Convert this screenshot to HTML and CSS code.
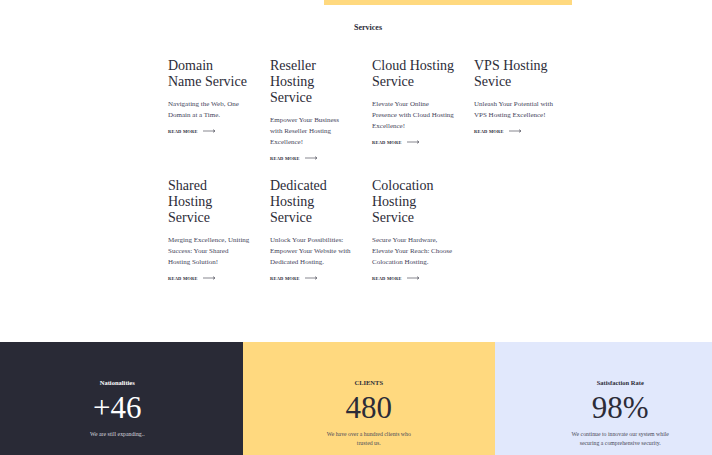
FILE: index.html
```html
<!DOCTYPE html>
<html lang="en">
<head>
<meta charset="utf-8">
<title>Services</title>
<link rel="stylesheet" href="styles.css">
</head>
<body>
<div class="topbar"></div>
<section class="services">
  <h2 class="title">Services</h2>
  <div class="grid">
    <div class="card">
      <h3>Domain<br>Name Service</h3>
      <p>Navigating the Web, One Domain at a Time.</p>
      <a class="more" href="#">Read more <svg width="13" height="4" viewBox="0 0 13 4"><path d="M0 2H12M10 0.6L12 2L10 3.4" fill="none" stroke="#55555f" stroke-width="0.7"/></svg></a>
    </div>
    <div class="card">
      <h3>Reseller Hosting Service</h3>
      <p>Empower Your Business with Reseller Hosting Excellence!</p>
      <a class="more" href="#">Read more <svg width="13" height="4" viewBox="0 0 13 4"><path d="M0 2H12M10 0.6L12 2L10 3.4" fill="none" stroke="#55555f" stroke-width="0.7"/></svg></a>
    </div>
    <div class="card">
      <h3>Cloud Hosting Service</h3>
      <p>Elevate Your Online Presence with Cloud Hosting Excellence!</p>
      <a class="more" href="#">Read more <svg width="13" height="4" viewBox="0 0 13 4"><path d="M0 2H12M10 0.6L12 2L10 3.4" fill="none" stroke="#55555f" stroke-width="0.7"/></svg></a>
    </div>
    <div class="card">
      <h3>VPS Hosting Sevice</h3>
      <p>Unleash Your Potential with VPS Hosting Excellence!</p>
      <a class="more" href="#">Read more <svg width="13" height="4" viewBox="0 0 13 4"><path d="M0 2H12M10 0.6L12 2L10 3.4" fill="none" stroke="#55555f" stroke-width="0.7"/></svg></a>
    </div>
    <div class="card">
      <h3>Shared Hosting Service</h3>
      <p>Merging Excellence, Uniting Success: Your Shared Hosting Solution!</p>
      <a class="more" href="#">Read more <svg width="13" height="4" viewBox="0 0 13 4"><path d="M0 2H12M10 0.6L12 2L10 3.4" fill="none" stroke="#55555f" stroke-width="0.7"/></svg></a>
    </div>
    <div class="card">
      <h3>Dedicated Hosting Service</h3>
      <p>Unlock Your Possibilities: Empower Your Website with Dedicated Hosting.</p>
      <a class="more" href="#">Read more <svg width="13" height="4" viewBox="0 0 13 4"><path d="M0 2H12M10 0.6L12 2L10 3.4" fill="none" stroke="#55555f" stroke-width="0.7"/></svg></a>
    </div>
    <div class="card">
      <h3>Colocation Hosting Service</h3>
      <p>Secure Your Hardware, Elevate Your Reach: Choose Colocation Hosting.</p>
      <a class="more" href="#">Read more <svg width="13" height="4" viewBox="0 0 13 4"><path d="M0 2H12M10 0.6L12 2L10 3.4" fill="none" stroke="#55555f" stroke-width="0.7"/></svg></a>
    </div>
  </div>
</section>
<section class="stats">
  <div class="stat dark">
    <div class="label">Nationalities</div>
    <div class="num">+46</div>
    <p class="desc">We are still expanding..</p>
  </div>
  <div class="stat yellow">
    <div class="label">CLIENTS</div>
    <div class="num">480</div>
    <p class="desc">We have over a hundred clients who trusted us.</p>
  </div>
  <div class="stat blue">
    <div class="label">Satisfaction Rate</div>
    <div class="num">98%</div>
    <p class="desc">We continue to innovate our system while securing a comprehensive security.</p>
  </div>
</section>
</body>
</html>
```

FILE: styles.css
```css
* { box-sizing: border-box; }
html, body { margin: 0; padding: 0; }
body {
  width: 712px;
  height: 455px;
  overflow: hidden;
  background: #ffffff;
  font-family: "Liberation Serif", "DejaVu Serif", serif;
  color: #2c2c38;
}
.topbar {
  width: 248px;
  height: 5px;
  margin-left: 324px;
  background: #ffd97f;
}
.services {
  width: 400px;
  margin-left: 168px;
  padding-top: 18px;
  height: 337px;
}
.title {
  margin: 0;
  text-align: center;
  font-size: 8px;
  line-height: 10px;
  font-weight: bold;
  color: #2c2c38;
}
.grid {
  margin-top: 24.5px;
  display: grid;
  grid-template-columns: repeat(4, 83px);
  column-gap: 19px;
  row-gap: 15.5px;
  align-items: start;
}
.card h3 {
  margin: 0;
  font-weight: normal;
  font-size: 14px;
  line-height: 16px;
  color: #2c2c38;
}
.card p {
  margin: 9px 0 0;
  font-size: 7px;
  line-height: 11px;
  color: #44445a;
}
.more {
  display: flex;
  align-items: center;
  gap: 5px;
  margin-top: 6.5px;
  height: 8px;
  font-size: 4.5px;
  font-weight: bold;
  letter-spacing: 0.2px;
  text-transform: uppercase;
  text-decoration: none;
  color: #2c2c38;
}
.stats {
  display: grid;
  grid-template-columns: repeat(3, 251.5px);
  width: 754.5px;
  margin-left: -8.5px;
  height: 113px;
}
.stat {
  padding-top: 37px;
  text-align: center;
}
.dark { background: #292a36; color: #ffffff; }
.yellow { background: #ffd97f; color: #2c2c38; }
.blue { background: #e1e8fc; color: #2c2c38; }
.label {
  font-size: 6.5px;
  line-height: 8px;
  font-weight: bold;
}
.num {
  margin-top: 5px;
  font-size: 31px;
  line-height: 31px;
}
.desc {
  margin: 6.5px auto 0;
  max-width: 100px;
  font-size: 5.8px;
  line-height: 9px;
}
.dark .desc { color: #d6d6de; }
.yellow .desc, .blue .desc { color: #4a4a58; }
```
